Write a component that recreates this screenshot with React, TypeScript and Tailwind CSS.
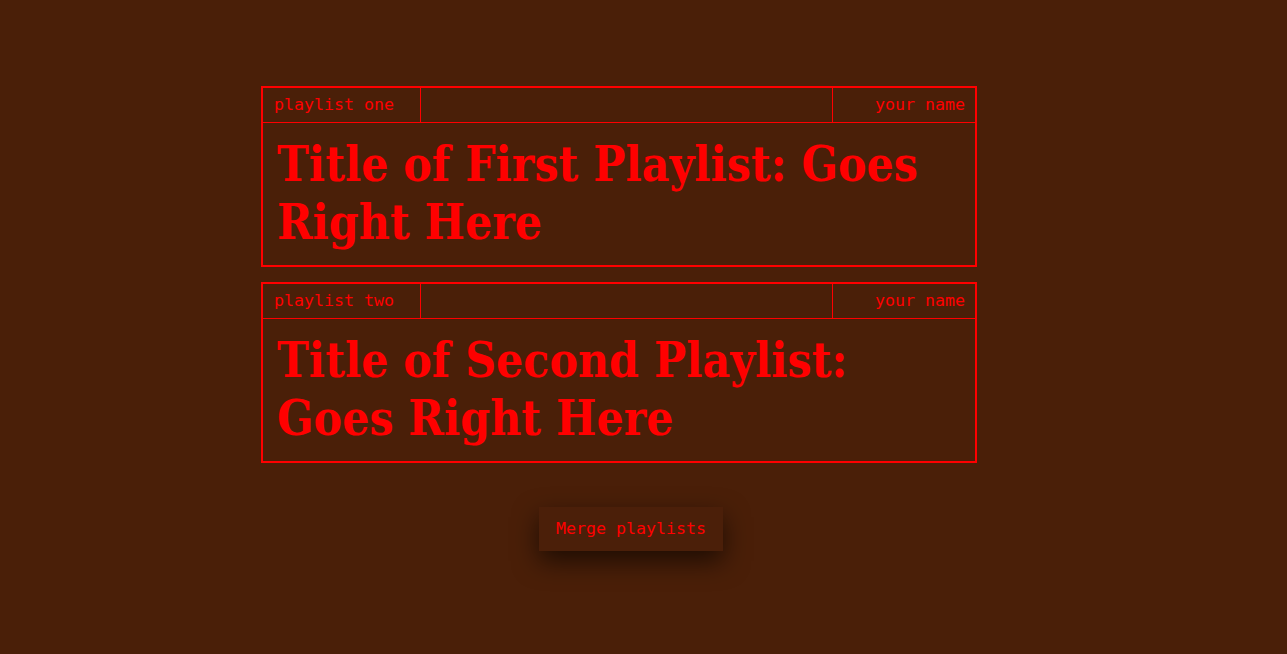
import React from "react";

const mono = { fontFamily: '"DejaVu Sans Mono", monospace' };
const serif = { fontFamily: '"DejaVu Serif Condensed", "DejaVu Serif", serif' };

function Card({ label, title }: { label: string; title: string }) {
  return (
    <div className="w-[716px] border-2 border-[#ff0000]">
      <div className="flex h-[35px] border-b border-[#ff0000] text-[16.6px] text-[#ff0000]" style={mono}>
        <div className="flex w-[158px] items-center border-r border-[#ff0000] pl-[11px]">{label}</div>
        <div className="flex-1" />
        <div className="flex w-[143px] items-center justify-end border-l border-[#ff0000] pr-[10px]">your name</div>
      </div>
      <div className="px-[14px] pt-[13px] pb-[14px] text-[47.6px] font-bold leading-[57.5px] text-[#ff0000]" style={serif}>
        {title}
      </div>
    </div>
  );
}

export default function App() {
  return (
    <div className="min-h-[654px] w-full bg-[#4a1f08] pt-[86px] pl-[261px]">
      <div className="flex flex-col gap-[15px]">
        <Card label="playlist one" title="Title of First Playlist: Goes Right Here" />
        <Card label="playlist two" title="Title of Second Playlist: Goes Right Here" />
      </div>
      <div className="mt-[44px] pl-[278px]">
        <button
          className="h-[44px] w-[184px] bg-[#4b1f09] pt-[1px] text-[16.6px] text-[#ff0000] shadow-[0_10px_26px_rgba(0,0,0,0.6)]"
          style={mono}
        >
          Merge playlists
        </button>
      </div>
    </div>
  );
}
